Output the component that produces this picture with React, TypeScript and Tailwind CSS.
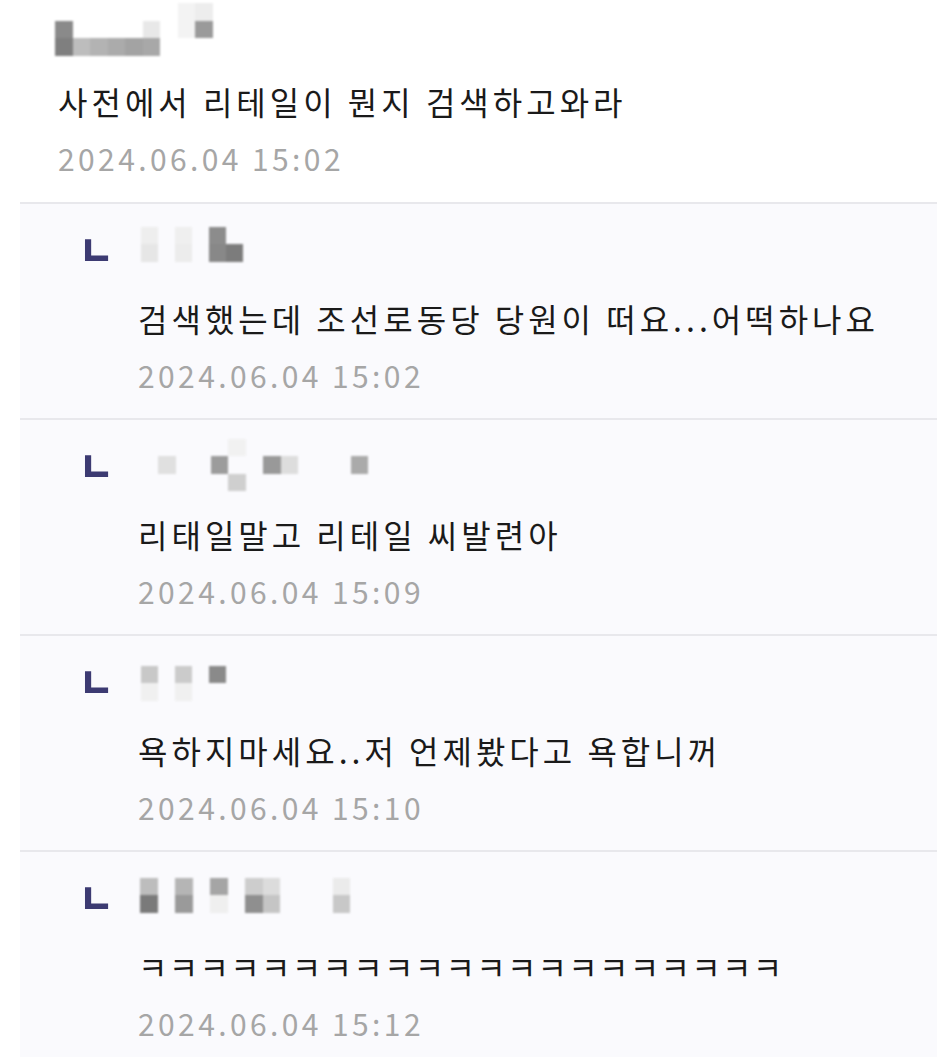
import React from "react";

type Cell = [number, number, string];

function Mosaic({ cells, cw, ch, cols, rows }: { cells: Cell[]; cw: number; ch: number; cols: number; rows: number }) {
  return (
    <div
      className="grid blur-[0.8px]"
      style={{ gridTemplateColumns: `repeat(${cols}, ${cw}px)`, gridTemplateRows: `repeat(${rows}, ${ch}px)` }}
    >
      {cells.map(([c, r, color], i) => (
        <div key={i} style={{ gridColumn: c + 1, gridRow: r + 1, backgroundColor: color }} />
      ))}
    </div>
  );
}

const font = { fontFamily: '"Noto Sans CJK KR", "Noto Sans", sans-serif' };

type Reply = { text: string; date: string; mosaic: Cell[]; cols: number; rows: number; mx: number; my: number; cw: number; laugh?: boolean };

const replies: Reply[] = [
  {
    text: "검색했는데 조선로동당 당원이 떠요...어떡하나요",
    date: "2024.06.04 15:02",
    mosaic: [
      [0, 0, "#eeeeee"], [0, 1, "#e6e6e6"], [2, 0, "#efefef"], [2, 1, "#ececec"],
      [4, 0, "#8c8c8c"], [4, 1, "#888888"], [5, 1, "#7c7c7c"],
    ],
    cols: 6, rows: 2, mx: 3, my: 25, cw: 17,
  },
  {
    text: "리태일말고 리테일 씨발련아",
    date: "2024.06.04 15:09",
    mosaic: [
      [4, 0, "#f1f1f1"], [0, 1, "#e0e0e0"], [3, 1, "#9c9c9c"], [4, 2, "#cfcfcf"],
      [6, 1, "#999999"], [7, 1, "#dddddd"], [11, 1, "#aaaaaa"],
    ],
    cols: 12, rows: 3, mx: 20, my: 21, cw: 17.5,
  },
  {
    text: "욕하지마세요..저 언제봤다고 욕합니꺼",
    date: "2024.06.04 15:10",
    mosaic: [
      [0, 0, "#c8c8c8"], [0, 1, "#f0f0f0"], [2, 0, "#cbcbcb"], [2, 1, "#f0f0f0"], [4, 0, "#8a8a8a"],
    ],
    cols: 5, rows: 2, mx: 3, my: 32, cw: 17,
  },
  {
    text: "ㅋㅋㅋㅋㅋㅋㅋㅋㅋㅋㅋㅋㅋㅋㅋㅋㅋㅋㅋㅋㅋ",
    date: "2024.06.04 15:12",
    mosaic: [
      [0, 0, "#bdbdbd"], [0, 1, "#7a7a7a"], [2, 0, "#b5b5b5"], [2, 1, "#9a9a9a"],
      [4, 0, "#a5a5a5"], [4, 1, "#efefef"], [6, 0, "#cdcdcd"], [6, 1, "#8f8f8f"],
      [7, 0, "#dcdcdc"], [7, 1, "#c5c5c5"], [11, 0, "#ebebeb"], [11, 1, "#c8c8c8"],
    ],
    cols: 12, rows: 2, mx: 2, my: 28, cw: 17.5, laugh: true,
  },
];

export default function App() {
  return (
    <div className="w-[937px] h-[1057px] overflow-hidden bg-white" style={font}>
      <div className="pl-[55px] pt-[3px]">
        <Mosaic
          cols={9}
          rows={3}
          cw={17.5}
          ch={17.5}
          cells={[
            [0, 1, "#8a8a8a"], [0, 2, "#7f7f7f"],
            [1, 2, "#bdbdbd"], [2, 2, "#b3b3b3"], [3, 2, "#ababab"], [4, 2, "#a3a3a3"], [5, 2, "#a8a8a8"],
            [5, 1, "#e8e8e8"], [7, 0, "#f3f3f3"], [7, 1, "#f3f3f3"], [8, 0, "#ededed"], [8, 1, "#9a9a9a"],
          ]}
        />
        <div className="mt-[21px] pl-[3px] text-[32px] leading-[48px] tracking-[4px] text-[#1a1a1a]">사전에서 리테일이 뭔지 검색하고와라</div>
        <div className="mt-[13px] pl-[3px] text-[30px] leading-[40px] tracking-[3.4px] text-[#a6a6a6]">2024.06.04 15:02</div>
      </div>
      <div className="mt-[24px] ml-[20px]">
        {replies.map((r, i) => (
          <div key={i} className="h-[216px] border-t-2 border-[#e8e8ec] bg-[#fafafd] flex">
            <div className="w-[118px] pl-[59px] pt-[23px] text-[38px] leading-[50px] font-black text-[#3c3a72]">
              <span className="inline-block origin-bottom scale-y-[1.15]">ㄴ</span>
            </div>
            <div className="flex flex-col">
              <div className="h-[79px]" style={{ paddingTop: r.my - 2, paddingLeft: r.mx }}>
                <Mosaic cells={r.mosaic} cols={r.cols} rows={r.rows} cw={r.cw} ch={17.5} />
              </div>
              <div className={`mt-[11px] text-[32px] leading-[48px] text-[#1a1a1a] ${r.laugh ? "tracking-[1.3px]" : "tracking-[4px]"}`}>{r.text}</div>
              <div className="mt-[13px] text-[30px] leading-[40px] tracking-[3.4px] text-[#a6a6a6]">{r.date}</div>
            </div>
          </div>
        ))}
      </div>
    </div>
  );
}
